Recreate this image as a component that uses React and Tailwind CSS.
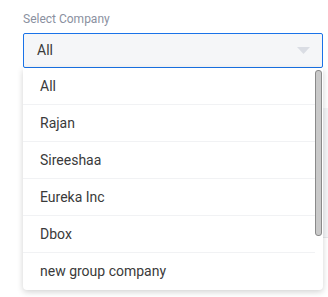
import { useState } from "react";

const companies = ["All", "Rajan", "Sireeshaa", "Eureka Inc", "Dbox", "new group company"];

export default function App() {
  const [selected, setSelected] = useState("All");

  return (
    <div className="relative w-[328px] h-[297px] bg-white overflow-hidden font-['Roboto',sans-serif]">
      {/* page content peeking out behind the menu */}
      <div className="absolute left-[323px] top-[108px] w-[10px] h-[130px] bg-[#f4f5f7] border-b border-[#e6e8eb]" />

      <div className="pl-[23px] pt-[11px] w-[323px]">
        <label className="block text-[12px] leading-[16px] text-[#8a90a0] mb-[6px]">
          Select Company
        </label>

        <div className="relative">
          <button className="w-full h-[35px] flex items-center justify-between pl-[13px] pr-[12px] bg-[#f5f6f8] border border-[#1a73e8] rounded-[2px] text-[14px] text-[#3a3a3a]">
            <span>{selected}</span>
            <svg width="13" height="7" viewBox="0 0 13 7">
              <path d="M0 0h13L6.5 7z" fill="#dadde4" />
            </svg>
          </button>

          <ul className="absolute left-0 top-full w-full bg-white rounded-b-[4px] shadow-[0_2px_6px_rgba(0,0,0,0.18)] z-10 pr-[8px]">
            {companies.map((name, i) => (
              <li
                key={name}
                onClick={() => setSelected(name)}
                className={`h-[37px] flex items-center pl-[17px] text-[14px] text-[#3a3a3a] cursor-pointer ${
                  i < companies.length - 1 ? "border-b border-[#f1f2f4]" : ""
                }`}
              >
                {name}
              </li>
            ))}
            <div className="absolute right-[1px] top-[2px] w-[7px] h-[166px] rounded-[3px] bg-[#c9c9c9] border border-[#8a8a8a]" />
          </ul>
        </div>
      </div>
    </div>
  );
}
